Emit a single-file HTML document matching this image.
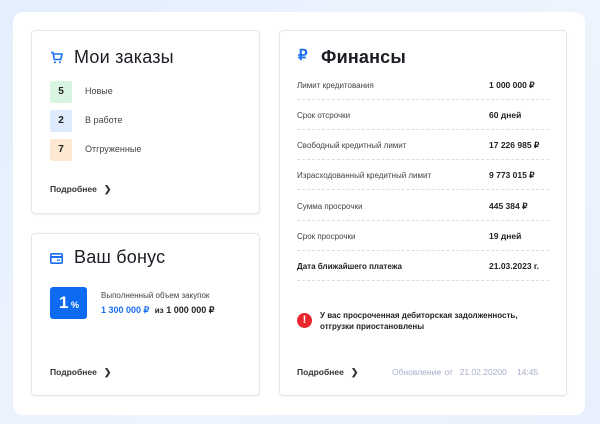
<!DOCTYPE html>
<html><head><meta charset="utf-8"><style>
*{margin:0;padding:0;box-sizing:border-box}
body{width:600px;height:424px;overflow:hidden;background:linear-gradient(135deg,#e4effd,#eef4fe 60%,#e8f0fd);font-family:"Liberation Sans",sans-serif;color:#222;position:relative}
.outer{position:absolute;left:13px;top:12px;width:572px;height:403px;background:#fff;border-radius:10px}
.card{position:absolute;background:#fff;border:1px solid #e3e6ee;border-radius:4px;box-shadow:0 1px 2px rgba(0,0,0,.05)}
.t{position:absolute;font-size:18px;font-weight:500;color:#1b1d24;letter-spacing:.2px}
.abs{position:absolute}
.badge{position:absolute;left:18px;width:22px;height:22px;border-radius:2px;font-size:10px;font-weight:bold;text-align:center;line-height:22px}
.lbl{position:absolute;left:53px;font-size:9px;color:#444}
.more{position:absolute;font-size:8.5px;font-weight:bold;color:#333}
.more span{margin-left:7px;font-size:9px}
.row{position:absolute;left:17px;width:252px;height:30px;border-bottom:1px dashed #dcdde2;font-size:8px;color:#444}
.row b{position:absolute;left:192px;top:10px;color:#222;font-size:8.5px}
.row i{position:absolute;left:0;top:11px;font-style:normal}
</style></head><body>
<div class="outer"></div>
<div class="card" style="left:31px;top:30px;width:229px;height:184px">
 <svg class="abs" style="left:18px;top:20px" width="13" height="13" viewBox="0 0 13 13" fill="none" stroke="#1b6ef3" stroke-width="1.6"><path d="M1 1.5h2l1.3 7h6.5l1.2-5.5H3.6"/><circle cx="5" cy="11.3" r="1" fill="#1b6ef3" stroke="none"/><circle cx="10" cy="11.3" r="1" fill="#1b6ef3" stroke="none"/></svg>
 <div class="t" style="left:42px;top:16px">Мои заказы</div>
 <div class="badge" style="top:50px;background:#d9f5e1">5</div><div class="lbl" style="top:55px">Новые</div>
 <div class="badge" style="top:79px;background:#ddebfd">2</div><div class="lbl" style="top:84px">В работе</div>
 <div class="badge" style="top:108px;background:#fde9d2">7</div><div class="lbl" style="top:113px">Отгруженные</div>
 <div class="more" style="left:18px;top:153px">Подробнее<span>❯</span></div>
</div>
<div class="card" style="left:31px;top:233px;width:229px;height:163px">
 <svg class="abs" style="left:18px;top:19px" width="13" height="11" viewBox="0 0 13 11"><rect x="0.8" y="0.8" width="11.4" height="9.4" rx="1.2" fill="none" stroke="#1b6ef3" stroke-width="1.6"/><rect x="1" y="3" width="11" height="2" fill="#1b6ef3"/><rect x="7" y="6.5" width="3" height="1.3" fill="#1b6ef3"/></svg>
 <div class="t" style="left:42px;top:13px">Ваш бонус</div>
 <div class="abs" style="left:18px;top:53px;width:37px;height:32px;background:#0d6bf2;border-radius:3px;color:#fff;font-size:17px;font-weight:bold;line-height:32px;padding-left:9px">1<span style="font-size:9px"> %</span></div>
 <div class="abs" style="left:69px;top:57px;font-size:8px;color:#444">Выполненный объем закупок</div>
 <div class="abs" style="left:69px;top:71px;font-size:9px;font-weight:bold;color:#1b6ef3">1 300 000 ₽ <span style="color:#222;font-size:8px;margin-left:3px">из</span> <span style="color:#222">1 000 000 ₽</span></div>
 <div class="more" style="left:18px;top:133px">Подробнее<span>❯</span></div>
</div>
<div class="card" style="left:279px;top:30px;width:288px;height:366px">
 <div class="abs" style="left:18px;top:15px;font-size:15px;font-weight:bold;color:#1b6ef3">₽</div>
 <div class="t" style="left:41px;top:16px;font-weight:bold">Финансы</div>
 <div class="row" style="top:39px"><i>Лимит кредитования</i><b>1 000 000 ₽</b></div>
 <div class="row" style="top:69px"><i>Срок отсрочки</i><b>60 дней</b></div>
 <div class="row" style="top:99px"><i>Свободный кредитный лимит</i><b>17 226 985 ₽</b></div>
 <div class="row" style="top:129px"><i>Израсходованный кредитный лимит</i><b>9 773 015 ₽</b></div>
 <div class="row" style="top:160px"><i>Сумма просрочки</i><b>445 384 ₽</b></div>
 <div class="row" style="top:190px"><i>Срок просрочки</i><b>19 дней</b></div>
 <div class="row" style="top:220px"><i style="font-weight:bold;color:#222">Дата ближайшего платежа</i><b>21.03.2023 г.</b></div>
 <div class="abs" style="left:17px;top:282px;width:15px;height:15px;border-radius:50%;background:#e8262c;color:#fff;font-size:11px;font-weight:bold;text-align:center;line-height:15px">!</div>
 <div class="abs" style="left:40px;top:279px;font-size:8px;font-weight:bold;color:#222;line-height:11px">У вас просроченная дебиторская задолженность,<br>отгрузки приостановлены</div>
 <div class="more" style="left:17px;top:336px">Подробнее<span>❯</span></div>
 <div class="abs" style="left:112px;top:336px;font-size:8.5px;color:#a7aec8;word-spacing:1px">Обновление от&nbsp; 21.02.20200 &nbsp;&nbsp;14:45</div>
</div>
</body></html>
